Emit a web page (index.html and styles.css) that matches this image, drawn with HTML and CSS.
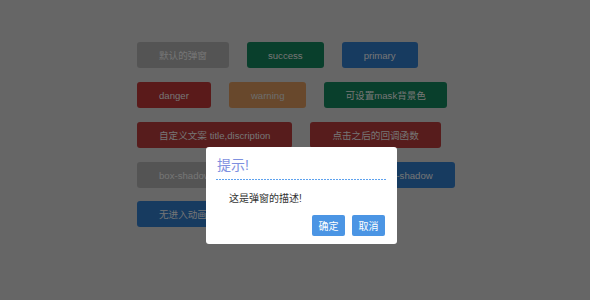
FILE: index.html
```html
<!DOCTYPE html>
<html lang="zh">
<head>
<meta charset="utf-8">
<title>弹窗示例</title>
<link rel="stylesheet" href="styles.css">
</head>
<body>
<div class="page">
  <div class="row">
    <button class="btn btn-default">默认的弹窗</button>
    <button class="btn btn-success">success</button>
    <button class="btn btn-primary">primary</button>
  </div>
  <div class="row">
    <button class="btn btn-danger">danger</button>
    <button class="btn btn-warning">warning</button>
    <button class="btn btn-success">可设置mask背景色</button>
  </div>
  <div class="row">
    <button class="btn btn-red">自定义文案 title,discription</button>
    <button class="btn btn-red">点击之后的回调函数</button>
  </div>
  <div class="row">
    <button class="btn btn-default">box-shadow</button>
    <button class="btn btn-primary">可自定义弹窗外层的样式 box-shadow</button>
  </div>
  <div class="row">
    <button class="btn btn-primary">无进入动画</button>
  </div>
</div>
<div class="mask"></div>
<div class="dialog">
  <div class="dialog-title">提示!</div>
  <div class="dialog-desc">这是弹窗的描述!</div>
  <div class="dialog-actions">
    <button class="dbtn">确定</button>
    <button class="dbtn">取消</button>
  </div>
</div>
</body>
</html>
```
FILE: styles.css
```css
html, body {
  margin: 0;
  padding: 0;
}
body {
  width: 590px;
  height: 300px;
  background: #bababa;
  font-family: "Liberation Sans", "Noto Sans CJK SC", sans-serif;
  overflow: hidden;
}
.page {
  padding: 42px 0 0 137px;
}
.row {
  display: flex;
  gap: 18px;
  margin-bottom: 14px;
}
.row:nth-child(4) {
  margin-bottom: 13px;
}
.btn {
  height: 26px;
  padding: 0 22px;
  border: none;
  border-radius: 3px;
  font-family: inherit;
  font-size: 9.6px;
  color: #d6d6d6;
  white-space: nowrap;
}
.btn-success { padding: 0 21px; }
.btn-default { background: #9a9a9a; }
.btn-success { background: #117350; }
.btn-primary { background: #2b6cb0; }
.btn-danger { background: #a43030; }
.btn-warning { background: #bd8450; color: #c6c6c6; }
.btn-red { background: #9e3434; }

.mask {
  position: fixed;
  inset: 0;
  background: rgba(0, 0, 0, 0.45);
}
.dialog {
  position: fixed;
  left: 206px;
  top: 147px;
  width: 191px;
  box-sizing: border-box;
  padding: 8px 10px 8px;
  background: #ffffff;
  border-radius: 3px;
}
.dialog-title {
  font-size: 14px;
  line-height: 20px;
  color: #7e90e0;
  padding: 0 1px 5px;
  border-bottom: 1px solid transparent;
  background-image: linear-gradient(to right, #5ea2ee 2px, transparent 2px);
  background-size: 3px 1px;
  background-repeat: repeat-x;
  background-position: left bottom;
}
.dialog-desc {
  margin-top: 12px;
  padding-left: 13px;
  font-size: 10px;
  line-height: 12px;
  color: #333333;
}
.dialog-actions {
  display: flex;
  justify-content: flex-end;
  gap: 7px;
  margin-top: 10px;
  padding-right: 2px;
}
.dbtn {
  width: 33px;
  height: 21px;
  padding: 0;
  border: none;
  border-radius: 2px;
  background: #4b95e4;
  color: #ffffff;
  font-family: inherit;
  font-size: 10px;
}
```
